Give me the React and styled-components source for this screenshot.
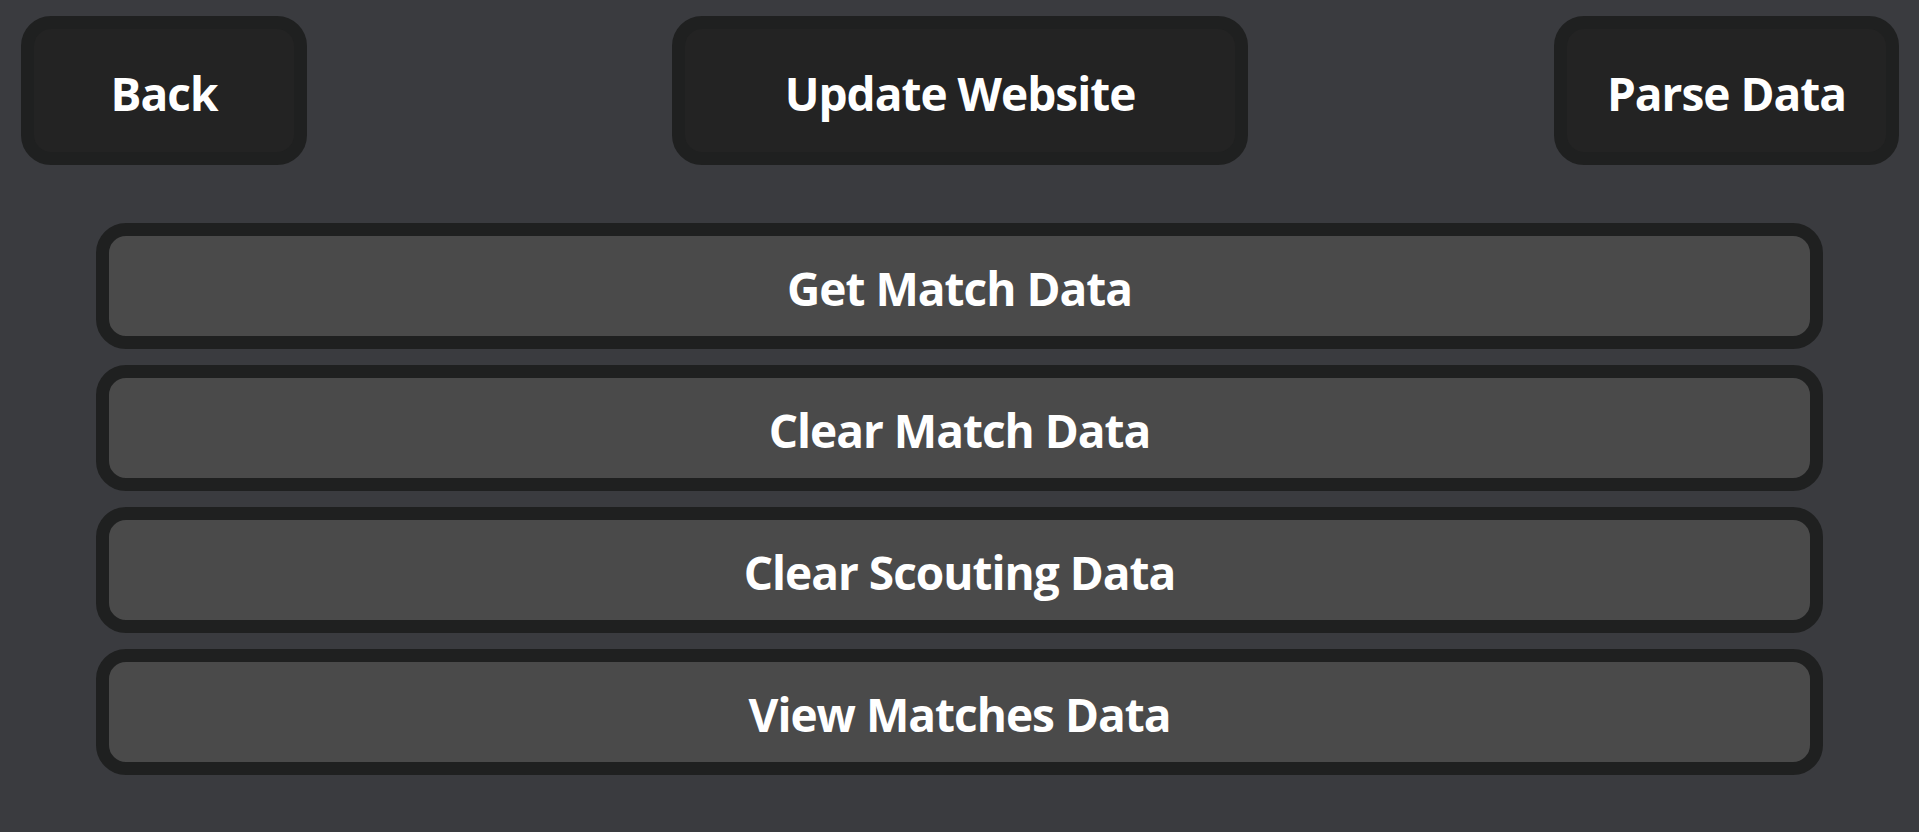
import React from 'react';
import styled, { createGlobalStyle } from 'styled-components';

const Global = createGlobalStyle`
  html, body {
    margin: 0;
    padding: 0;
    background: #3a3b3f;
    font-family: "Open Sans", "Noto Sans", sans-serif;
  }
`;

const Page = styled.div`
  min-height: 832px;
  background: #3a3b3f;
`;

const TopBar = styled.div`
  display: grid;
  grid-template-columns: 1fr auto 1fr;
  align-items: center;
  padding: 16px 20px 0 21px;
`;

const TopButton = styled.button`
  justify-self: ${p => p.$align || 'center'};
  width: ${p => p.$width}px;
  height: 149px;
  box-sizing: border-box;
  border: 13px solid #1f2020;
  border-radius: 30px;
  background: #232323;
  color: #ffffff;
  font-family: inherit;
  font-size: 46px;
  font-weight: 700;
  letter-spacing: -1px;
  padding: 5px 0 0;
  cursor: pointer;
`;

const List = styled.div`
  width: 90%;
  margin: 58px auto 0;
  display: flex;
  flex-direction: column;
  gap: 16px;
`;

const ListButton = styled.button`
  width: 100%;
  height: 126px;
  box-sizing: border-box;
  border: 13px solid #1f2020;
  border-radius: 30px;
  background: #4a4a4a;
  color: #ffffff;
  font-family: inherit;
  font-size: 46px;
  font-weight: 700;
  letter-spacing: -1px;
  padding: 4px 0 0;
  cursor: pointer;
`;

const actions = ['Get Match Data', 'Clear Match Data', 'Clear Scouting Data', 'View Matches Data'];

export default function App() {
  return (
    <Page>
      <Global />
      <TopBar>
        <TopButton $align="start" $width={286}>Back</TopButton>
        <TopButton $width={576}>Update Website</TopButton>
        <TopButton $align="end" $width={345}>Parse Data</TopButton>
      </TopBar>
      <List>
        {actions.map(a => (
          <ListButton key={a}>{a}</ListButton>
        ))}
      </List>
    </Page>
  );
}
